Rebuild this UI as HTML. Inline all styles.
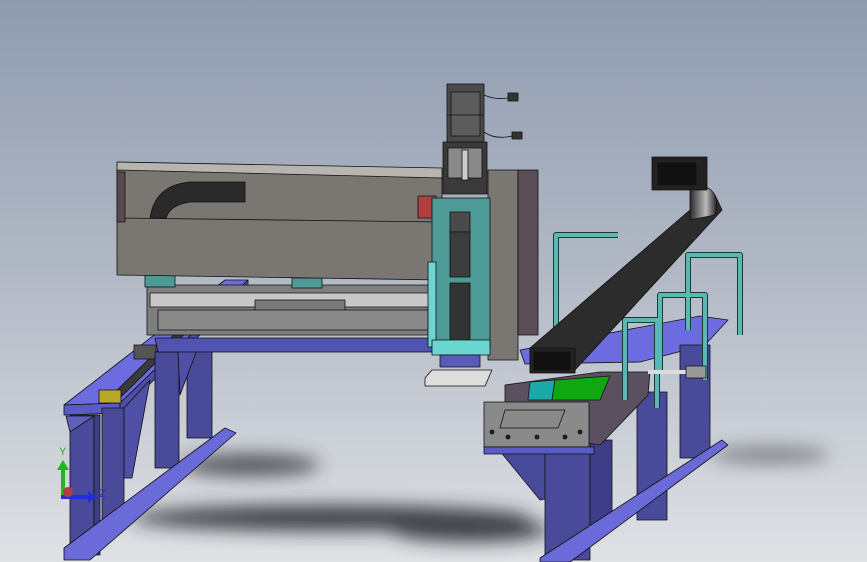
<!DOCTYPE html>
<html><head><meta charset="utf-8"><style>
html,body{margin:0;padding:0;width:867px;height:562px;overflow:hidden}
svg{display:block}
</style></head><body>
<svg width="867" height="562" viewBox="0 0 867 562" xmlns="http://www.w3.org/2000/svg">
<defs>
<linearGradient id="bg" x1="0" y1="0" x2="0" y2="1">
<stop offset="0" stop-color="#8f9bb0"/><stop offset="0.5" stop-color="#b3bac6"/><stop offset="1" stop-color="#dfe1e5"/>
</linearGradient>
<filter id="bl" x="-50%" y="-50%" width="200%" height="200%"><feGaussianBlur stdDeviation="9"/></filter>
<linearGradient id="tray" x1="0" y1="0" x2="1" y2="0"><stop offset="0" stop-color="#2a2a2a"/><stop offset="0.6" stop-color="#bbb"/><stop offset="1" stop-color="#222"/></linearGradient>
</defs>
<rect width="867" height="562" fill="url(#bg)"/>
<g filter="url(#bl)" opacity="0.85">
<ellipse cx="330" cy="518" rx="200" ry="13" fill="#25282e"/>
<ellipse cx="250" cy="465" rx="70" ry="11" fill="#3a3d45"/>
<ellipse cx="470" cy="530" rx="80" ry="12" fill="#25282e"/>
<ellipse cx="770" cy="455" rx="60" ry="8" fill="#6a6d75"/>
</g>
<g stroke="#111" stroke-width="0.8" stroke-linejoin="round">
<!-- left rail -->
<polygon points="64,405 225,280 248,280 120,403" fill="#6c6ce0"/>
<polygon points="64,405 120,403 120,413 64,415" fill="#5a5ac8"/>
<polygon points="120,403 248,280 248,288 120,413" fill="#4e4eaa"/>
<polygon points="112,395 215,295 222,297 120,398" fill="#3a3a3a"/>
<rect x="99" y="390" width="22" height="13" fill="#b8a82a"/>
<rect x="134" y="345" width="22" height="14" fill="#555"/>
<!-- left legs -->
<rect x="70" y="415" width="24" height="140" fill="#4a4a9a"/>
<rect x="94" y="415" width="6" height="140" fill="#3e3e88"/>
<polygon points="66,416 94,416 70,432" fill="#5f5fbf"/>
<rect x="102" y="408" width="22" height="112" fill="#4a4a9a"/>
<polygon points="124,408 150,380 132,478 124,478" fill="#4f4fa5"/>
<rect x="155" y="352" width="24" height="116" fill="#4a4a9a"/>
<rect x="187" y="340" width="25" height="98" fill="#4a4a9a"/>
<polygon points="178,352 200,342 180,395" fill="#4f4fa5"/>
<polygon points="64,548 225,428 236,433 90,560 64,560" fill="#6a6ad8"/>
<!-- crossbeam -->
<polygon points="155,338 440,338 440,352 158,352" fill="#5252b0"/>
<!-- linear module -->
<rect x="147" y="285" width="298" height="50" fill="#7e7e7e"/>
<rect x="150" y="293" width="290" height="14" fill="#c8c8c8"/>
<rect x="255" y="300" width="90" height="18" fill="#7a7a7a"/>
<rect x="158" y="310" width="270" height="20" fill="#8a8a8a"/>
<rect x="145" y="275" width="30" height="12" fill="#4e9a96"/>
<rect x="292" y="278" width="30" height="10" fill="#4e9a96"/>
<!-- gray beam -->
<polygon points="117,162 442,168 442,180 117,172" fill="#b8b5b0"/>
<polygon points="117,170 442,178 442,280 117,275" fill="#7a7672"/>
<line x1="117" y1="218" x2="442" y2="222"/>
<rect x="117" y="172" width="8" height="50" fill="#5a4a50"/>
<path d="M150,218 Q155,185 190,182 L245,182 L245,202 L190,202 Q170,205 166,218 Z" fill="#2a2a2a"/>
<rect x="418" y="196" width="18" height="22" fill="#b04040"/>
<!-- Z axis -->
<rect x="488" y="170" width="30" height="190" fill="#7a7672"/>
<rect x="518" y="170" width="20" height="165" fill="#5a4e58"/>
<rect x="443" y="142" width="44" height="52" fill="#3a3a3a"/>
<rect x="448" y="148" width="34" height="30" fill="#8a8a8a"/>
<rect x="462" y="150" width="6" height="30" fill="#ccc"/>
<rect x="447" y="84" width="37" height="58" fill="#4a4a4a"/>
<rect x="451" y="92" width="29" height="44" fill="#5c5c5c"/>
<line x1="447" y1="115" x2="484" y2="115"/>
<path d="M484,95 Q495,100 508,98" fill="none"/>
<rect x="508" y="93" width="10" height="8" fill="#333"/>
<path d="M484,132 Q495,140 512,136" fill="none"/>
<rect x="512" y="132" width="10" height="7" fill="#333"/>
<rect x="432" y="198" width="58" height="150" fill="#4e9a96"/>
<rect x="428" y="262" width="8" height="85" fill="#6ad6d0"/>
<rect x="450" y="212" width="20" height="20" fill="#4a4a4a"/>
<rect x="450" y="232" width="20" height="45" fill="#3c3c3c"/>
<rect x="450" y="283" width="20" height="60" fill="#333"/>
<rect x="432" y="340" width="58" height="15" fill="#6ad6d0"/>
<rect x="440" y="355" width="40" height="12" fill="#5a5ab8"/>
<polygon points="425,378 432,370 492,370 485,386 425,386" fill="#ddd"/>
<!-- right table top -->
<polygon points="520,350 700,316 728,320 705,345 640,362 525,364" fill="#6c6ce0"/>
<!-- right legs -->
<polygon points="495,445 590,448 590,490 540,500" fill="#4a4a9a"/>
<rect x="545" y="448" width="45" height="112" fill="#4a4a9a"/>
<rect x="590" y="440" width="22" height="90" fill="#3e3e88"/>
<rect x="637" y="392" width="30" height="128" fill="#4a4a9a"/>
<rect x="680" y="345" width="30" height="113" fill="#4a4a9a"/>
<polygon points="540,558 722,440 728,445 570,562 540,562" fill="#6a6ad8"/>
<!-- conveyor -->
<polygon points="505,385 600,372 650,372 648,395 600,445 505,430" fill="#5a5060"/>
<polygon points="530,382 555,380 552,400 528,400" fill="#1aa8a8"/>
<polygon points="555,380 610,376 600,400 552,400" fill="#10a810"/>
<rect x="484" y="402" width="105" height="45" fill="#8a8a8a"/>
<polygon points="505,410 565,410 558,428 500,428" fill="none"/>
<circle cx="492" cy="432" r="2" fill="#222"/><circle cx="508" cy="437" r="2" fill="#222"/><circle cx="537" cy="437" r="2" fill="#222"/><circle cx="565" cy="437" r="2" fill="#222"/><circle cx="580" cy="432" r="2" fill="#222"/>
<rect x="484" y="447" width="110" height="7" fill="#5a5ac8"/>
<!-- teal frames -->
<g fill="none" stroke="#1a3a38" stroke-width="6">
<path d="M556,340 L556,235 L618,235"/>
<path d="M688,330 L688,255 L740,255 L740,335"/>
<path d="M660,370 L660,295 L705,295 L705,380"/>
<path d="M625,400 L625,320 L657,320 L657,408"/>
</g>
<g fill="none" stroke="#5ab8b2" stroke-width="4">
<path d="M556,340 L556,235 L618,235"/>
<path d="M688,330 L688,255 L740,255 L740,335"/>
<path d="M660,370 L660,295 L705,295 L705,380"/>
<path d="M625,400 L625,320 L657,320 L657,408"/>
</g>
<!-- black cable tray -->
<polygon points="530,348 690,210 715,195 722,210 575,370 575,373 530,372" fill="#2c2c2c"/>
<path d="M690,190 L700,185 Q722,190 715,215 L690,220 Z" fill="url(#tray)"/>
<rect x="652" y="157" width="55" height="33" fill="#222"/>
<rect x="658" y="163" width="38" height="22" fill="#111"/>
<rect x="530" y="348" width="45" height="25" fill="#222"/>
<rect x="534" y="352" width="36" height="18" fill="#111"/>
<rect x="648" y="370" width="40" height="4" fill="#ddd" stroke="none"/>
<rect x="686" y="366" width="20" height="12" fill="#999"/>
</g>
<rect x="61" y="470" width="4" height="28" fill="#1db81d"/>
<polygon points="57,470 63,460 69,470" fill="#1db81d"/>
<rect x="61" y="495" width="28" height="4" fill="#2030d8"/>
<polygon points="88,491 97,497 88,503" fill="#2030d8"/>
<circle cx="68" cy="492" r="5" fill="#b04040"/>
<text x="59" y="455" font-family="Liberation Sans, sans-serif" font-size="11" fill="#1db81d">Y</text>
<text x="99" y="497" font-family="Liberation Sans, sans-serif" font-size="11" fill="#2030d8">Z</text>
</svg>
</body></html>
